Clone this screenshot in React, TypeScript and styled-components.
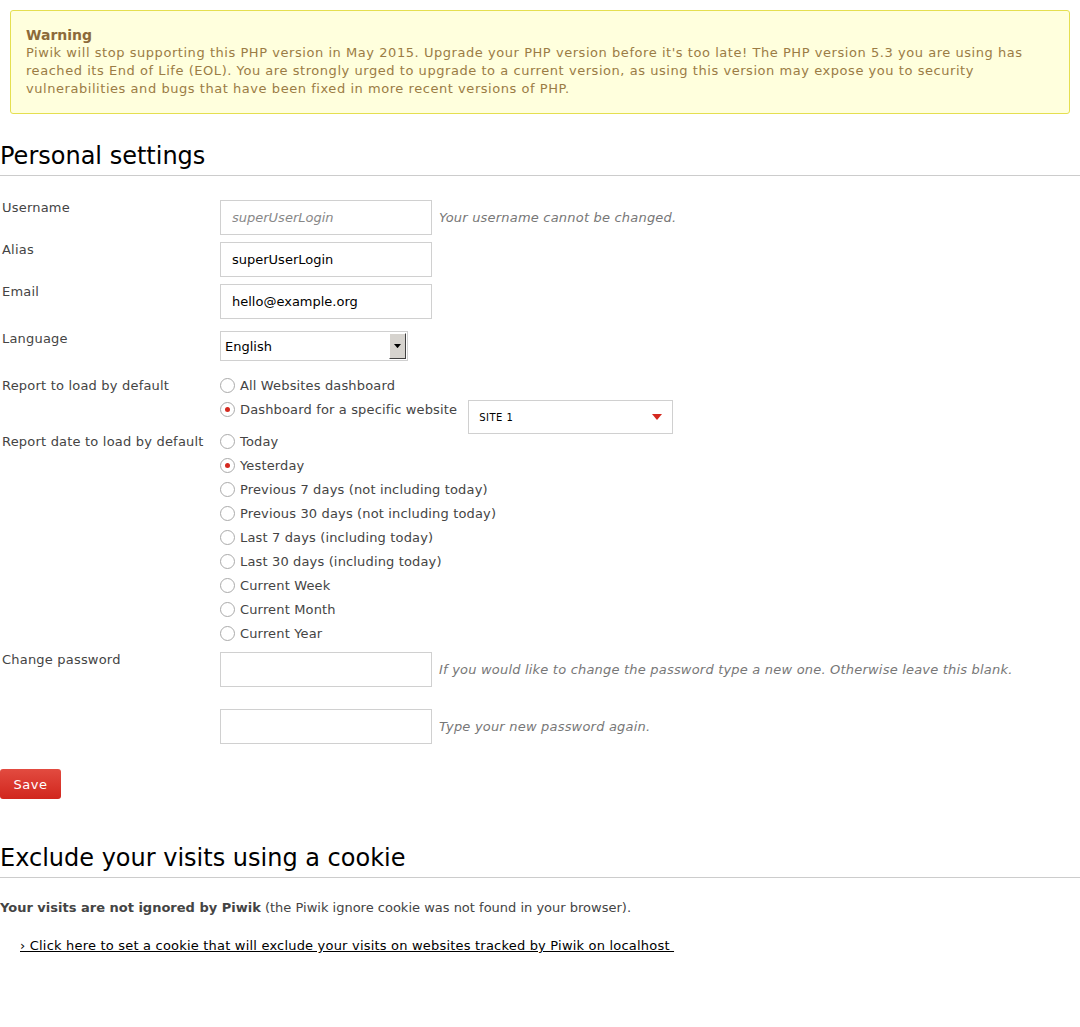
import React from 'react'
import styled, { createGlobalStyle } from 'styled-components'

const TEXT = '#444'
const BORDER = '#d0d0d0'
const RED = '#d4291f'

const GlobalStyle = createGlobalStyle`
  body {
    margin: 0;
    background: #fff;
    font-family: 'DejaVu Sans', Verdana, sans-serif;
    font-size: 13px;
    color: ${TEXT};
  }
`

const Page = styled.div`
  padding: 10px 0 60px;
`

const Notice = styled.div`
  margin: 0 10px;
  padding: 15px 15px 15px;
  background: #ffffdd;
  border: 1px solid #e5df50;
  border-radius: 3px;
  color: #9b7c45;
  font-size: 13px;
  line-height: 18px;
  letter-spacing: 0.55px;
`

const NoticeTitle = styled.div`
  font-weight: bold;
  font-size: 14px;
  letter-spacing: 0;
  color: #8c6a3a;
`

const Heading = styled.h2<{ $gap?: number }>`
  margin: ${({ $gap }) => $gap ?? 28}px 0 0;
  padding-bottom: 5px;
  border-bottom: 1px solid #ccc;
  font-family: 'DejaVu Sans', Verdana, sans-serif;
  font-weight: normal;
  font-size: 24px;
  line-height: 28px;
  color: #000;
`

const Form = styled.div`
  display: grid;
  grid-template-columns: 220px 1fr;
  row-gap: 7px;
  padding: 24px 0 0;
`

const Label = styled.div<{ $top?: number }>`
  padding: ${({ $top }) => $top ?? 0}px 0 0 2px;
  letter-spacing: 0.2px;
`

const Field = styled.div<{ $top?: number }>`
  display: flex;
  align-items: center;
  gap: 7px;
  padding-top: ${({ $top }) => $top ?? 0}px;
`

const Input = styled.input<{ $muted?: boolean }>`
  box-sizing: border-box;
  width: 212px;
  height: 35px;
  padding: 0 11px;
  border: 1px solid ${BORDER};
  font-family: inherit;
  font-size: 13px;
  color: #000;
  font-style: ${({ $muted }) => ($muted ? 'italic' : 'normal')};
  outline: none;
  &::placeholder {
    color: #888;
  }
`

const Hint = styled.span`
  font-style: italic;
  color: #777;
  letter-spacing: 0.2px;
`

const Select = styled.div`
  box-sizing: border-box;
  width: 188px;
  height: 30px;
  margin-top: 5px;
  display: flex;
  align-items: center;
  justify-content: space-between;
  border: 1px solid ${BORDER};
  padding: 0 0 0 4px;
  color: #000;
`

const SelectButton = styled.div`
  box-sizing: border-box;
  width: 17px;
  height: 26px;
  margin-right: 1px;
  background: #d6d3ce;
  border: 1px solid #fff;
  border-right-color: #404040;
  border-bottom-color: #404040;
  display: flex;
  align-items: center;
  justify-content: center;
`

const RadioList = styled.div<{ $top?: number }>`
  display: flex;
  flex-direction: column;
  padding-top: ${({ $top }) => $top ?? 0}px;
`

const RadioRow = styled.div`
  display: flex;
  align-items: center;
  height: 24px;
  gap: 5px;
  letter-spacing: 0.15px;
`

const Radio = styled.span<{ $checked?: boolean }>`
  box-sizing: border-box;
  width: 15px;
  height: 15px;
  border-radius: 50%;
  border: 1px solid #aaa;
  background: #fff;
  display: flex;
  align-items: center;
  justify-content: center;
  &::after {
    content: '';
    width: 5px;
    height: 5px;
    border-radius: 50%;
    background: ${({ $checked }) => ($checked ? RED : 'transparent')};
  }
`

const SitePicker = styled.div`
  box-sizing: border-box;
  align-self: flex-start;
  width: 205px;
  height: 34px;
  margin: 3px 0 -13px 6px;
  border: 1px solid ${BORDER};
  display: flex;
  align-items: center;
  justify-content: space-between;
  padding: 0 10px;
  font-size: 10px;
  color: #000;
  letter-spacing: 0.5px;
`

const Save = styled.button`
  margin-top: 25px;
  width: 61px;
  height: 30px;
  border: none;
  border-radius: 3px;
  background: linear-gradient(#e24b40, #d1261d);
  color: #fff;
  font-family: inherit;
  font-size: 13px;
  letter-spacing: 0.5px;
`

const Paragraph = styled.p`
  margin: 22px 0 0;
`

const CookieLink = styled.a`
  display: inline-block;
  margin: 23px 0 0 20px;
  color: #000;
  text-decoration: underline;
  letter-spacing: 0.2px;
`

const DownArrow = ({ color, size }: { color: string; size: number }) => (
  <svg width={size} height={size * 0.6} viewBox="0 0 10 6">
    <path d="M0 0h10L5 6z" fill={color} />
  </svg>
)

const dateOptions = [
  'Today',
  'Yesterday',
  'Previous 7 days (not including today)',
  'Previous 30 days (not including today)',
  'Last 7 days (including today)',
  'Last 30 days (including today)',
  'Current Week',
  'Current Month',
  'Current Year',
]

export default function App() {
  return (
    <>
      <GlobalStyle />
      <Page>
        <Notice>
          <NoticeTitle>Warning</NoticeTitle>
          Piwik will stop supporting this PHP version in May 2015. Upgrade your PHP version before
          it's too late! The PHP version 5.3 you are using has reached its End of Life (EOL). You
          are strongly urged to upgrade to a current version, as using this version may expose you
          to security vulnerabilities and bugs that have been fixed in more recent versions of PHP.
        </Notice>

        <Heading>Personal settings</Heading>
        <Form>
          <Label>Username</Label>
          <Field>
            <Input $muted readOnly placeholder="superUserLogin" />
            <Hint>Your username cannot be changed.</Hint>
          </Field>

          <Label>Alias</Label>
          <Field>
            <Input readOnly value="superUserLogin" />
          </Field>

          <Label>Email</Label>
          <Field>
            <Input readOnly value="hello@example.org" />
          </Field>

          <Label $top={5}>Language</Label>
          <Field>
            <Select>
              English
              <SelectButton>
                <DownArrow color="#000" size={7} />
              </SelectButton>
            </Select>
          </Field>

          <Label $top={10}>Report to load by default</Label>
          <RadioList $top={5}>
            <RadioRow>
              <Radio />
              All Websites dashboard
            </RadioRow>
            <RadioRow>
              <Radio $checked />
              Dashboard for a specific website
              <SitePicker>
                SITE 1
                <DownArrow color={RED} size={10} />
              </SitePicker>
            </RadioRow>
          </RadioList>

          <Label $top={6}>Report date to load by default</Label>
          <RadioList $top={1}>
            {dateOptions.map((option) => (
              <RadioRow key={option}>
                <Radio $checked={option === 'Yesterday'} />
                {option}
              </RadioRow>
            ))}
          </RadioList>

          <Label>Change password</Label>
          <Field>
            <Input type="password" />
            <Hint>If you would like to change the password type a new one. Otherwise leave this blank.</Hint>
          </Field>

          <Label />
          <Field $top={15}>
            <Input type="password" />
            <Hint>Type your new password again.</Hint>
          </Field>
        </Form>
        <Save>Save</Save>

        <Heading $gap={45}>Exclude your visits using a cookie</Heading>
        <Paragraph>
          <b>Your visits are not ignored by Piwik</b> (the Piwik ignore cookie was not found in your
          browser).
        </Paragraph>
        <CookieLink href="#">
          › Click here to set a cookie that will exclude your visits on websites tracked by Piwik on
          localhost&nbsp;
        </CookieLink>
      </Page>
    </>
  )
}
